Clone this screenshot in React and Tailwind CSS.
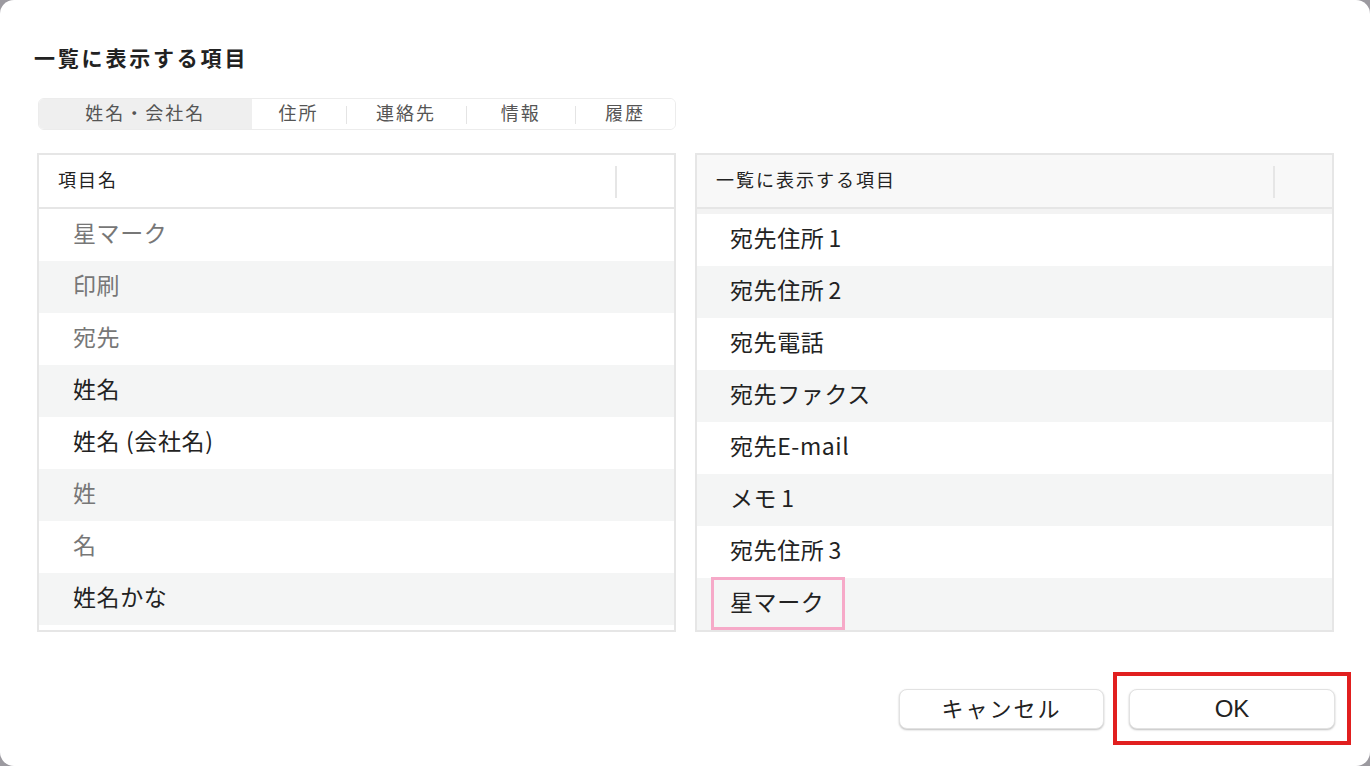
import React from "react";

const font = { fontFamily: '"Noto Sans CJK JP", "Noto Sans", sans-serif' };

const leftRows = [
  { t: "星マーク", dim: true },
  { t: "印刷", dim: true },
  { t: "宛先", dim: true },
  { t: "姓名", dim: false },
  { t: "姓名 (会社名)", dim: false },
  { t: "姓", dim: true },
  { t: "名", dim: true },
  { t: "姓名かな", dim: false },
];

const rightRows = [
  { t: "宛先住所", d: "1" },
  { t: "宛先住所", d: "2" },
  { t: "宛先電話" },
  { t: "宛先ファクス" },
  { t: "宛先E-mail" },
  { t: "メモ", d: "1" },
  { t: "宛先住所", d: "3" },
  { t: "星マーク" },
];

const tabs = [
  { t: "姓名・会社名", w: "w-[213px]" },
  { t: "住所", w: "w-[94px]" },
  { t: "連絡先", w: "w-[121px]" },
  { t: "情報", w: "w-[109px]" },
  { t: "履歴", w: "w-[100px]" },
];

export default function App() {
  return (
    <div className="w-[1370px] h-[766px] bg-[#9c9aa0] overflow-hidden" style={font}>
      <div className="w-full h-full bg-white rounded-[14px] relative flex flex-col">
        <div className="pl-[34px] pt-[42px] text-[21px] tracking-[2.8px] font-bold text-[#222] leading-[30px]">一覧に表示する項目</div>

        <div className="ml-[38px] mt-[26px] flex h-[32px] w-[638px] rounded-[6px] border border-[#ececec] overflow-hidden">
          {tabs.map((tab, i) => (
            <div
              key={i}
              className={`${tab.w} flex items-center justify-center pb-[3px] text-[18px] tracking-[2px] text-[#555] ${i === 0 ? "bg-[#efefef]" : "bg-white"} relative`}
            >
              {i > 1 && <span className="absolute left-0 top-[7px] h-[18px] w-px bg-[#e4e4e4]" />}
              {tab.t}
            </div>
          ))}
        </div>

        <div className="flex mt-[23px] ml-[37px] gap-[19px]">
          <div className="w-[639px] h-[479px] border-2 border-[#e6e6e6] flex flex-col overflow-hidden">
            <div className="h-[54px] flex items-center pb-[3px] border-b-2 border-[#e6e6e6] relative shrink-0">
              <span className="pl-[19px] text-[18px] tracking-[2px] text-[#222]">項目名</span>
              <span className="absolute left-[576px] top-[11px] h-[32px] w-[2px] bg-[#e6e6e6]" />
            </div>
            {leftRows.map((r, i) => (
              <div
                key={i}
                className={`h-[52px] shrink-0 flex items-center pl-[34px] pb-[5px] text-[23px] tracking-[0.6px] ${i % 2 === 1 ? "bg-[#f4f5f5]" : "bg-white"} ${r.dim ? "text-[#777]" : "text-[#222]"}`}
              >
                {r.t}
              </div>
            ))}
          </div>

          <div className="w-[639px] h-[479px] border-2 border-[#e6e6e6] flex flex-col overflow-hidden">
            <div className="h-[54px] flex items-center pb-[3px] border-b-2 border-[#e6e6e6] relative shrink-0 bg-[#f8f8f8]">
              <span className="pl-[19px] text-[18px] tracking-[2px] text-[#222]">一覧に表示する項目</span>
              <span className="absolute left-[576px] top-[11px] h-[32px] w-[2px] bg-[#e6e6e6]" />
            </div>
            <div className="h-[5px] shrink-0 bg-[#f3f3f3]" />
            {rightRows.map((r, i) => (
              <div
                key={i}
                className={`h-[52px] shrink-0 flex items-center pl-[33px] pb-[5px] text-[23px] tracking-[0.6px] text-[#222] relative ${i % 2 === 1 ? "bg-[#f4f5f5]" : "bg-white"}`}
              >
                {i === 7 && (
                  <span className="absolute left-[14px] top-[-1px] w-[134px] h-[53px] border-[3px] border-[#f6a9c8]" />
                )}
                <span className="relative">
                  {r.t}
                  {r.d && <span className="pl-[4px] pr-[4px]">{r.d}</span>}
                </span>
              </div>
            ))}
          </div>
        </div>

        <div className="flex justify-end items-center mt-[40px] pr-[19px]">
          <button className="w-[205px] h-[40px] pb-[3px] rounded-[8px] bg-white border border-[#e2e2e2] shadow-[0_1px_2px_rgba(0,0,0,0.25)] text-[22px] tracking-[2px] text-[#222] flex items-center justify-center">
            キャンセル
          </button>
          <div className="ml-[9px] w-[238px] h-[73px] border-[4px] border-[#e11f1f] flex items-center justify-center">
            <button className="w-[206px] h-[40px] rounded-[8px] bg-white border border-[#e2e2e2] shadow-[0_1px_2px_rgba(0,0,0,0.25)] text-[24px] text-[#222] flex items-center justify-center" style={{ fontFamily: '"Liberation Sans", "Noto Sans CJK JP", sans-serif' }}>
              OK
            </button>
          </div>
        </div>
      </div>
    </div>
  );
}
